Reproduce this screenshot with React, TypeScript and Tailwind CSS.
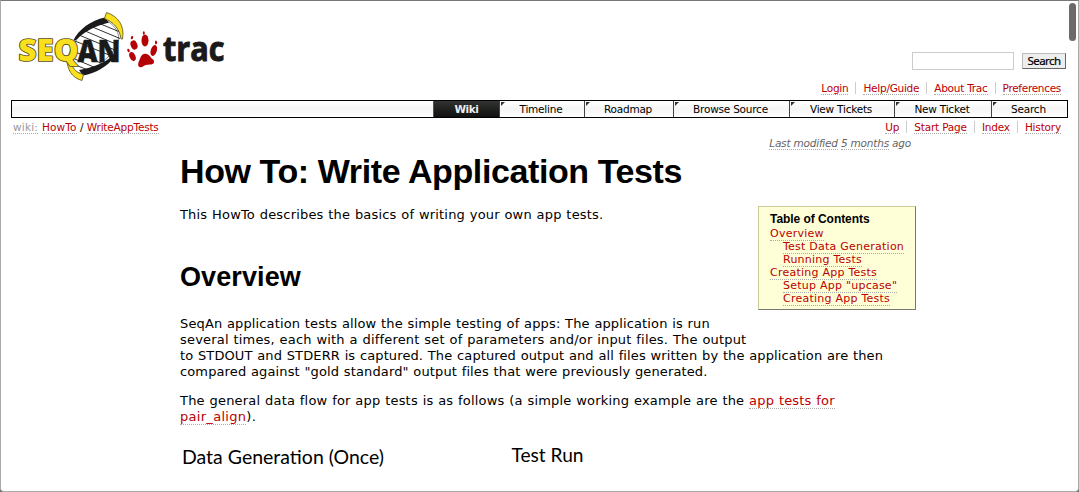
import React from "react";

const verdana = "font-['DejaVu_Sans',Verdana,sans-serif]";
const arial = "font-['Liberation_Sans',Arial,sans-serif]";
const small = "text-[10.5px] tracking-[-0.25px]";

function Link({ children, className = "text-[#b00]" }: { children: React.ReactNode; className?: string }) {
  return (
    <a href="#" className={`border-b border-dotted border-[#aaa] ${className}`}>
      {children}
    </a>
  );
}

function Logo() {
  return (
    <svg width="240" height="81" viewBox="0 1 240 81" className="block shrink-0" fontFamily="'Open Sans','Noto Sans',sans-serif" fontWeight="800" strokeLinejoin="round">
      <path d="M105 20C92 24 80 33 74 44C69 52 67 58 68 62C70 68 75 72 80 73C98 68 112 56 118 43C121 33 114 24 105 20Z" fill="#fff" stroke="#444" strokeWidth="0.6" />
      <g stroke="#1a1a1a" strokeWidth="0.9" fill="none">
        <path d="M97 22.500l23 9.500M90 26l30 12.500M84 30.500l33 14M79 35l36 15M75 41l34 14M71 50l32 14M68 56l28 12M68 62l20 8" />
      </g>
      <path d="M105 17.500C91 20 78 30 73 41L76 40C85 31 95 26 109 22.500Z" fill="#1a1a1a" />
      <path d="M79 70C93 67.500 105 63 112 56L114.500 57C107 67 96 73 83 75.500Z" fill="#1a1a1a" />
      <path d="M106.500 12.500L104.500 18.500C113 22 119.500 28 121 39L122.500 39C125 26 118 16 106.500 12.500Z" fill="#fadf1c" stroke="#55501c" strokeWidth="0.8" />
      <path d="M67 60C67.500 69 71 77.500 82 80.500L83.500 74.500C76 73 72 68 70.500 60Z" fill="#fadf1c" stroke="#55501c" strokeWidth="0.8" />
      <g fontSize="29.500">
        <text x="18.500" y="61" textLength="60" lengthAdjust="spacingAndGlyphs" fill="none" stroke="#55501c" strokeWidth="1.700">SEQ</text>
        <text x="18.500" y="61" textLength="60" lengthAdjust="spacingAndGlyphs" fill="#fadf1c">SEQ</text>
        <text x="77.500" y="61.500" textLength="43" lengthAdjust="spacingAndGlyphs" fill="#1a1a1a" stroke="#1a1a1a" strokeWidth="0.4">AN</text>
      </g>
      <g fill="#b50005">
        <ellipse cx="134" cy="45" rx="3.300" ry="4.700" transform="rotate(-22 134 45)" />
        <ellipse cx="145" cy="40.500" rx="3.500" ry="6" />
        <ellipse cx="153.800" cy="50.500" rx="3" ry="5.600" transform="rotate(18 153.800 50.500)" />
        <ellipse cx="132.500" cy="56.500" rx="2.900" ry="4.600" transform="rotate(-25 132.500 56.500)" />
        <ellipse cx="132" cy="37.700" rx="1.100" ry="1.700" transform="rotate(20 132 37.700)" />
        <ellipse cx="143.800" cy="33" rx="1" ry="1.800" />
        <ellipse cx="156" cy="42.500" rx="1" ry="2" />
        <ellipse cx="128.500" cy="50.500" rx="1.100" ry="1.900" transform="rotate(-20 128.500 50.500)" />
        <path d="M142 55C145 52.500 149 54 150.500 57C151.500 59 154.500 59 154 62C153.500 65 150 64.500 147 64.700C144 65 142 68 139.700 67C137 66 138.500 62 139.500 60C140.500 58 140.500 56.500 142 55Z" />
      </g>
      <text x="163" y="61" fontSize="34" fontWeight="700" textLength="61.500" lengthAdjust="spacingAndGlyphs" fill="#1a1a1a" stroke="#1a1a1a" strokeWidth="1">trac</text>
    </svg>
  );
}

const sep = "border-l border-[#ccc]";

function SearchForm() {
  return (
    <form className="mt-[51px] flex items-start gap-2 pr-[12px]">
      <input aria-label="Search" className="h-[18px] w-[102px] border border-[#ccc] bg-white" />
      <button type="button" className="mt-px h-[16px] w-[44px] border border-[#bbb] border-r-[#666] border-b-[#666] bg-[#eee] font-['Noto_Sans',sans-serif] text-[11.5px] leading-[14px] text-black">
        <span className="-mx-1 tracking-[-0.55px] [-webkit-text-stroke:0.2px_black]">Search</span>
      </button>
    </form>
  );
}

const tabs = [
  { label: "Timeline", width: "w-[85px]" },
  { label: "Roadmap", width: "w-[89px]" },
  { label: "Browse Source", width: "w-[116px]" },
  { label: "View Tickets", width: "w-[105px]" },
  { label: "New Ticket", width: "w-[97px]" },
  { label: "Search", width: "w-[76px]" },
];

function MainNav() {
  return (
    <nav className={`mr-[10px] ml-[10px] flex h-[18px] shrink-0 justify-end border border-black bg-linear-to-b from-white via-[#f5f5f5] to-white leading-[16px] ${small}`}>
      <span className="w-[66px] border-l border-[#555] bg-linear-to-b from-[#333] via-[#20221e] to-[#111] text-center font-bold tracking-[-0.4px] text-[#eee]">Wiki</span>
      {tabs.map((t) => (
        <span key={t.label} className={`flex border-l border-[#444] text-black ${t.width}`}>
          <svg width="5" height="5" className="mt-px ml-px shrink-0">
            <path d="M0 0H4L0 4Z" fill="#333" />
          </svg>
          <span className="-ml-2 flex-1 text-center tracking-[-0.22px] whitespace-nowrap">{t.label}</span>
        </span>
      ))}
    </nav>
  );
}

function Contents() {
  return (
    <aside className="mt-[53px] h-[104px] w-[158px] shrink-0 border border-[#cc9] border-r-[#777] border-b-[#777] bg-[#ffffd7] pt-[6px] pl-[11px] text-[11px] leading-[13px] tracking-[0.24px] whitespace-nowrap">
      <h4 className={`mb-px text-[12px] leading-[13px] font-bold tracking-[-0.05px] text-black ${arial}`}>Table of Contents</h4>
      <ul>
        <li><Link>Overview</Link></li>
        <li className="pl-[13px]"><Link>Test Data Generation</Link></li>
        <li className="pl-[13px]"><Link>Running Tests</Link></li>
        <li><Link>Creating App Tests</Link></li>
        <li className="pl-[13px]"><Link>Setup App "upcase"</Link></li>
        <li className="pl-[13px]"><Link>Creating App Tests</Link></li>
      </ul>
    </aside>
  );
}

export default function App() {
  return (
    <div className="h-[492px] w-[1079px] bg-[#666]">
      <div className={`flex h-[492px] flex-col overflow-hidden rounded-b-[4px] border border-[#aaa] border-t-[#777] bg-white text-black ${verdana}`}>
        <header className="flex h-[81px] shrink-0 justify-between">
          <div className="-ml-px"><Logo /></div>
          <div className="flex">
            <SearchForm />
            <div className="-ml-[9px] mt-[2px] mr-[2px] h-[38px] w-[7px] rounded-full bg-[#6b6b6b]" />
          </div>
        </header>
        <div className={`flex h-[18px] shrink-0 justify-end pr-[17px] leading-[12px] ${small}`}>
          <div className="flex h-[12px]">
            <span className="pr-[7px]"><Link>Login</Link></span>
            <span className={`px-[7px] ${sep}`}><Link>Help/Guide</Link></span>
            <span className={`px-[7px] ${sep}`}><Link>About Trac</Link></span>
            <span className={`pl-[7px] ${sep}`}><Link className="tracking-[-0.3px] text-[#b00]">Preferences</Link></span>
          </div>
        </div>
        <MainNav />
        <div className={`flex h-[18px] shrink-0 justify-between pt-[3px] pr-[17px] pl-[12px] leading-[12px] ${small}`}>
          <div className="whitespace-nowrap">
            <Link className="tracking-[0.2px] text-[#999]">wiki:</Link>
            <Link className="ml-[4px] tracking-[0.1px] text-[#b00]">HowTo</Link>
            <span className="mx-[3.5px]">/</span>
            <Link className="tracking-[-0.2px] text-[#b00]">WriteAppTests</Link>
          </div>
          <div className="flex h-[12px] tracking-[-0.18px]">
            <span className="pr-[7px]"><Link>Up</Link></span>
            <span className={`px-[7px] ${sep}`}><Link>Start Page</Link></span>
            <span className={`px-[7px] ${sep}`}><Link>Index</Link></span>
            <span className={`pl-[7px] ${sep}`}><Link>History</Link></span>
          </div>
        </div>
        <p className="h-[17px] shrink-0 pr-[167px] text-right text-[10.5px] leading-[15px] tracking-[-0.2px] text-[#666] italic">
          <span className="border-b border-dotted border-[#aaa]">Last modified</span>{" "}
          <span className="border-b border-dotted border-[#aaa]">5 months</span> ago
        </p>
        <div className="flex h-[158px] shrink-0 pl-[179px] whitespace-nowrap">
          <div className="w-[578px] shrink-0">
            <h1 className={`text-[34px] leading-[36px] font-bold tracking-[-0.4px] ${arial}`}>How To: Write Application Tests</h1>
            <p className="mt-[18px] text-[13px] leading-[16px] tracking-[0.18px] [word-spacing:0.45px]">This HowTo describes the basics of writing your own app tests.</p>
            <h2 className={`mt-[38px] text-[27px] leading-[32px] font-bold tracking-[0.1px] ${arial}`}>Overview</h2>
          </div>
          <Contents />
        </div>
        <div className="shrink-0 pt-[5px] pl-[179px] text-[13px] leading-[16px] whitespace-nowrap [word-spacing:0.45px]">
          <p>
            <span className="block tracking-[0.13px]">SeqAn application tests allow the simple testing of apps: The application is run</span>
            <span className="block tracking-[0.185px]">several times, each with a different set of parameters and/or input files. The output</span>
            <span className="block tracking-[0.115px]">to STDOUT and STDERR is captured. The captured output and all files written by the application are then</span>
            <span className="block tracking-[0.125px]">compared against "gold standard" output files that were previously generated.</span>
          </p>
          <p className="mt-[13px] tracking-[0.19px]">
            <span className="block">The general data flow for app tests is as follows (a simple working example are the <Link>app tests for</Link></span>
            <span className="block tracking-[0.3px]"><Link>pair_align</Link>).</span>
          </p>
        </div>
        <svg width="440" height="50" viewBox="180 436 440 50" className="ml-[179px] mt-[10px] shrink-0" fontFamily="Lato,'Noto Sans',sans-serif" fontSize="19.500">
          <text x="182" y="465" textLength="202" lengthAdjust="spacingAndGlyphs">Data Generation (Once)</text>
          <text x="511.500" y="463" textLength="72" lengthAdjust="spacingAndGlyphs">Test Run</text>
        </svg>
      </div>
    </div>
  );
}
